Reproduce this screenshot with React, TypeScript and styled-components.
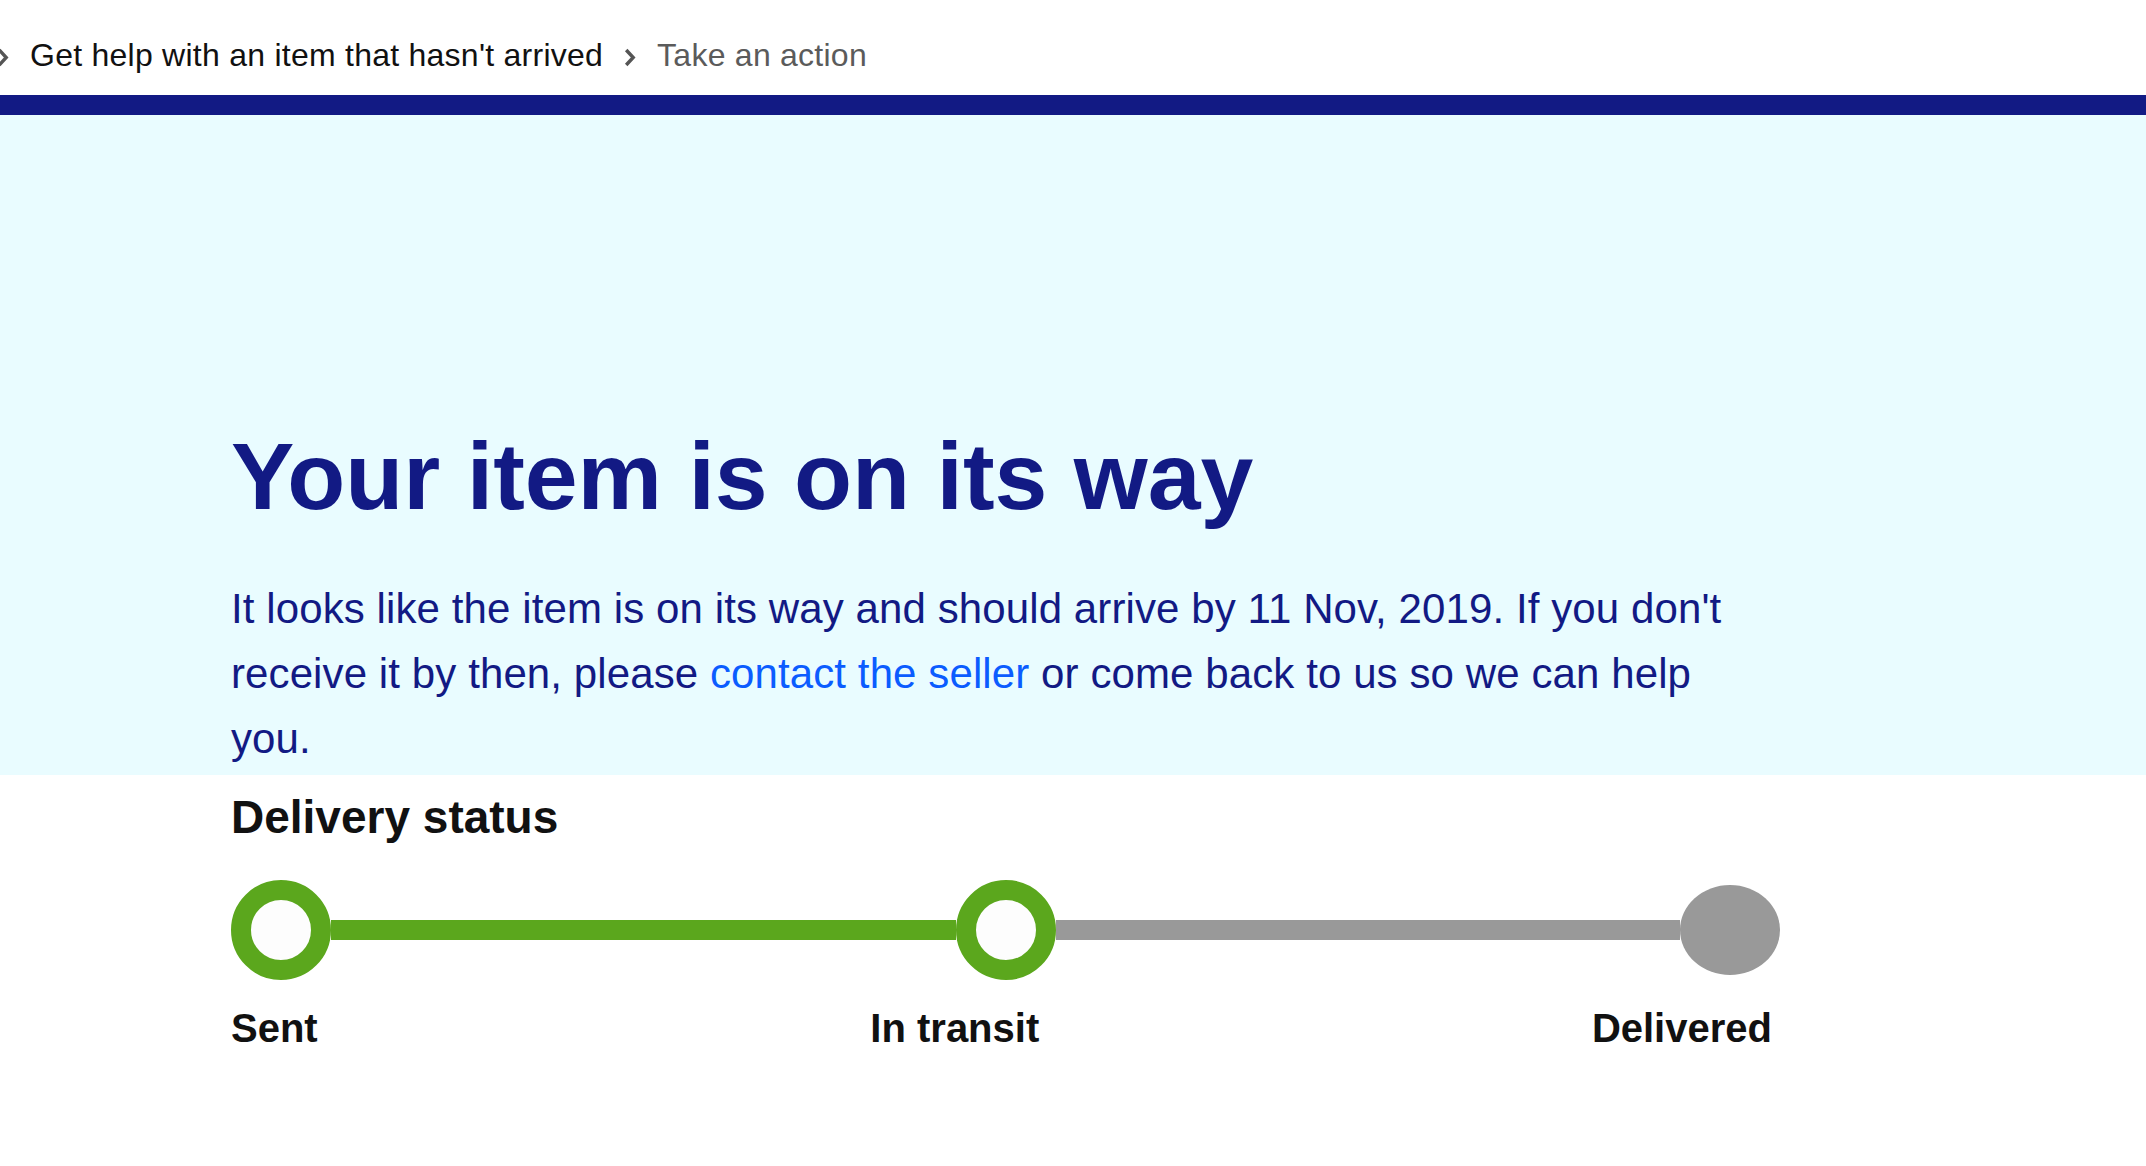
import React from "react";
import styled, { createGlobalStyle } from "styled-components";

const NAVY = "#121a84";
const GREEN = "#5ba71d";
const GREY = "#999999";

const GlobalStyle = createGlobalStyle`
  html, body {
    margin: 0;
    padding: 0;
    background: #ffffff;
    font-family: "Liberation Sans", Arial, sans-serif;
  }
  * { box-sizing: border-box; }
`;

const Page = styled.div`
  width: 100%;
  min-height: 1166px;
  overflow: hidden;
  background: #ffffff;
`;

const Breadcrumbs = styled.nav`
  display: flex;
  align-items: center;
  gap: 21px;
  height: 40px;
  margin-top: 35px;
  margin-bottom: 20px;
  font-size: 32px;
  line-height: 40px;
  letter-spacing: 0.25px;
  white-space: nowrap;
`;

const Crumb = styled.a<{ $current?: boolean }>`
  color: ${(p) => (p.$current ? "#5b5b5b" : "#111111")};
  text-decoration: none;
`;

const ChevronWrap = styled.span<{ $lead?: boolean }>`
  display: inline-flex;
  align-items: center;
  margin-left: ${(p) => (p.$lead ? "-3px" : "0")};
  margin-top: 4px;
`;

const Chevron: React.FC<{ lead?: boolean }> = ({ lead }) => (
  <ChevronWrap $lead={lead}>
    <svg width="12" height="19" viewBox="0 0 12 19" aria-hidden="true">
      <path
        d="M2.2 2 L9.2 9.5 L2.2 17"
        fill="none"
        stroke="#555555"
        strokeWidth="3.4"
        strokeLinecap="butt"
        strokeLinejoin="miter"
      />
    </svg>
  </ChevronWrap>
);

const TopBar = styled.div`
  height: 20px;
  background: ${NAVY};
`;

const Hero = styled.section`
  background: #e9fcff;
  padding: 305px 0 4px;
`;

const Container = styled.div`
  padding-left: 231px;
  width: calc(231px + 1549px);
`;

const Title = styled.h1`
  margin: 0;
  font-size: 95px;
  line-height: 112px;
  font-weight: 700;
  color: ${NAVY};
`;

const Lead = styled.p`
  margin: 44px 0 0;
  font-size: 42px;
  line-height: 65px;
  letter-spacing: 0.1px;
  color: ${NAVY};
`;

const Link = styled.a`
  color: #0b5cff;
  text-decoration: none;
`;

const Status = styled.section`
  padding-top: 14px;
`;

const StatusTitle = styled.h2`
  margin: 0;
  font-size: 46px;
  line-height: 56px;
  font-weight: 700;
  color: #111111;
`;

const Track = styled.div`
  display: flex;
  align-items: center;
  margin-top: 35px;
  height: 100px;
`;

const Dot = styled.div<{ $done: boolean }>`
  flex: none;
  width: 100px;
  height: ${(p) => (p.$done ? "100px" : "90px")};
  border-radius: 50%;
  background: ${(p) => (p.$done ? "#fdfdfd" : GREY)};
  border: ${(p) => (p.$done ? `20px solid ${GREEN}` : "none")};
`;

const Segment = styled.div<{ $color: string }>`
  flex: 1;
  height: 20px;
  background: ${(p) => p.$color};
`;

const Labels = styled.div`
  display: flex;
  justify-content: space-between;
  margin-top: 24px;
  padding-right: 8px;
`;

const Label = styled.span`
  font-size: 40px;
  line-height: 48px;
  font-weight: 700;
  color: #111111;
`;

export default function App() {
  return (
    <Page>
      <GlobalStyle />
      <Breadcrumbs>
        <Chevron lead />
        <Crumb href="#">Get help with an item that hasn't arrived</Crumb>
        <Chevron />
        <Crumb $current>Take an action</Crumb>
      </Breadcrumbs>
      <TopBar />
      <Hero>
        <Container>
          <Title>Your item is on its way</Title>
          <Lead>
            It looks like the item is on its way and should arrive by 11 Nov, 2019. If you don't
            receive it by then, please <Link href="#">contact the seller</Link> or come back to us
            so we can help you.
          </Lead>
        </Container>
      </Hero>
      <Status>
        <Container>
          <StatusTitle>Delivery status</StatusTitle>
          <Track>
            <Dot $done />
            <Segment $color={GREEN} />
            <Dot $done />
            <Segment $color={GREY} />
            <Dot $done={false} />
          </Track>
          <Labels>
            <Label>Sent</Label>
            <Label>In transit</Label>
            <Label>Delivered</Label>
          </Labels>
        </Container>
      </Status>
    </Page>
  );
}
